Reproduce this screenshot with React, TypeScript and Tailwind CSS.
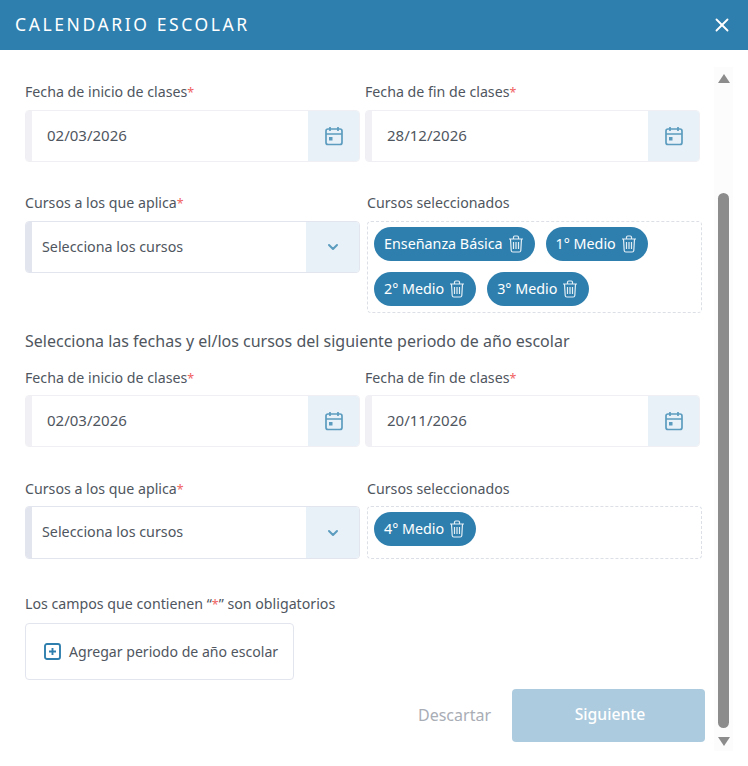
import React from 'react';
import { X, ChevronDown } from 'lucide-react';

const Req = () => <span className="text-[12.5px] text-[#f0625f]">*</span>;

const CalendarIcon = () => (
  <svg width="18" height="20" viewBox="0 0 18 20" fill="none" stroke="#5b9cbf" strokeWidth="1.7">
    <rect x="1" y="3" width="16" height="15.5" rx="2" />
    <path d="M1 8h16M5 1v4M13 1v4" />
    <rect x="4" y="11" width="3.5" height="3.5" fill="#5b9cbf" stroke="none" />
  </svg>
);

const TrashIcon = () => (
  <svg width="16" height="18" viewBox="0 0 16 18" fill="none" stroke="#e3eef5" strokeWidth="1.2">
    <path d="M1 4h14M5.5 4V2.2c0-.7.5-1.2 1.2-1.2h2.6c.7 0 1.2.5 1.2 1.2V4" />
    <path d="M2.5 4l.7 11.5c.1.9.7 1.5 1.6 1.5h6.4c.9 0 1.5-.6 1.6-1.5L13.5 4" />
    <path d="M5.5 7v7M8 7v7M10.5 7v7" />
  </svg>
);

const DateField = ({ label, value, gap }: { label: string; value: string; gap: string }) => (
  <div className="w-[335px]">
    <div className="h-[20px] text-[14.2px] leading-[20px] text-[#4f5660]">
      {label}
      <Req />
    </div>
    <div className={`flex h-[52px] overflow-hidden rounded border border-[#f0f0f4] bg-white ${gap}`}>
      <div className="w-[6px] bg-[#f0f0f5]" />
      <div className="flex flex-1 items-center pb-[2px] pl-[15px] text-[15px] text-[#4f5660]">{value}</div>
      <div className="flex w-[51px] items-center justify-center bg-[#e8f1f7]">
        <CalendarIcon />
      </div>
    </div>
  </div>
);

const SelectField = ({ gap, height }: { gap: string; height: string }) => (
  <div className="w-[335px]">
    <div className="h-[20px] text-[14.2px] leading-[20px] text-[#4f5660]">
      Cursos a los que aplica
      <Req />
    </div>
    <div className={`flex overflow-hidden rounded border border-[#e2e5ee] bg-white ${gap} ${height}`}>
      <div className="w-[6px] bg-[#e2e5ee]" />
      <div className="flex flex-1 items-center pb-[1px] pl-[10px] text-[14.3px] text-[#4f5660]">Selecciona los cursos</div>
      <div className="flex w-[53px] items-center justify-center bg-[#e8f1f7]">
        <ChevronDown size={16} strokeWidth={3} color="#5b9cbf" />
      </div>
    </div>
  </div>
);

const Chip = ({ text }: { text: string }) => (
  <div className="flex h-[34px] items-center gap-[5px] rounded-[17px] bg-[#2f7fae] pl-[10px] pr-[11px] text-[14.3px] text-white">
    <span className="pb-[1px]">{text}</span>
    <TrashIcon />
  </div>
);

const SelectedBox = ({ chips, box, gap }: { chips: string[][]; box: string; gap: string }) => (
  <div className="ml-[2px] w-[335px]">
    <div className="h-[20px] text-[14.2px] leading-[20px] text-[#4f5660]">Cursos seleccionados</div>
    <div className={`flex flex-col gap-[11px] rounded border border-dashed border-[#dcdfe6] px-[6px] pt-[5px] ${gap} ${box}`}>
      {chips.map((row, i) => (
        <div key={i} className="flex gap-[11px]">
          {row.map((c) => (
            <Chip key={c} text={c} />
          ))}
        </div>
      ))}
    </div>
  </div>
);

const App: React.FC = () => {
  return (
    <div className="flex h-[766px] w-[748px] flex-col overflow-hidden bg-white font-['Noto_Sans',sans-serif]">
      {/* Header */}
      <div className="flex h-[50px] shrink-0 items-center justify-between bg-[#2f7fae] pl-[15px] pr-[15px] text-white">
        <span className="pb-[2px] text-[17.5px] tracking-[2.6px]">CALENDARIO ESCOLAR</span>
        <X size={22} strokeWidth={2} />
      </div>

      <div className="flex flex-1">
        {/* Form */}
        <div className="w-[714px] pl-[25px] pt-[32px]">
          <div className="flex gap-[5px]">
            <DateField label="Fecha de inicio de clases" value="02/03/2026" gap="mt-[8px]" />
            <DateField label="Fecha de fin de clases" value="28/12/2026" gap="mt-[8px]" />
          </div>

          <div className="mt-[31px] flex gap-[5px]">
            <SelectField gap="mt-[8px]" height="h-[52px]" />
            <SelectedBox chips={[['Enseñanza Básica', '1° Medio'], ['2° Medio', '3° Medio']]} box="h-[92px]" gap="mt-[8px]" />
          </div>

          <div className="mt-[17px] h-[22px] text-[16px] leading-[22px] text-[#4f5660]">
            Selecciona las fechas y el/los cursos del siguiente periodo de año escolar
          </div>

          <div className="mt-[16px] flex gap-[5px]">
            <DateField label="Fecha de inicio de clases" value="02/03/2026" gap="mt-[7px]" />
            <DateField label="Fecha de fin de clases" value="20/11/2026" gap="mt-[7px]" />
          </div>

          <div className="mt-[32px] flex gap-[5px]">
            <SelectField gap="mt-[7px]" height="h-[53px]" />
            <SelectedBox chips={[['4° Medio']]} box="h-[53px]" gap="mt-[7px]" />
          </div>

          <div className="mt-[35px] h-[20px] text-[14.2px] leading-[20px] text-[#4f5660]">
            Los campos que contienen “<Req />” son obligatorios
          </div>

          <div className="mt-[9px] flex h-[57px] w-[269px] items-center gap-[8px] rounded border border-[#e2e5ee] pl-[18px] text-[14.1px] text-[#4f5660]">
            <svg width="17" height="17" viewBox="0 0 17 17" fill="none" stroke="#2f7fae" strokeWidth="1.9">
              <rect x="1" y="1" width="15" height="15" rx="2" />
              <path d="M8.5 5v7M5 8.5h7" />
            </svg>
            Agregar periodo de año escolar
          </div>

          <div className="mt-[9px] flex w-[680px] items-center justify-end gap-[21px]">
            <span className="pb-[2px] text-[16px] text-[#a9adb5]">Descartar</span>
            <div className="flex h-[53px] w-[193px] items-center justify-center rounded bg-[#adcbde] pb-[2px] pl-[3px] text-[15.7px] font-medium text-white">
              Siguiente
            </div>
          </div>
        </div>

        {/* Scrollbar */}
        <div className="mb-[15px] mt-[17px] flex w-[19px] flex-col items-center bg-[#fcfcfc]">
          <div className="mt-[7px] h-0 w-0 border-x-[6.5px] border-b-[9px] border-x-transparent border-b-[#8c8c8c]" />
          <div className="mt-[110px] w-[11px] flex-1 rounded-full bg-[#8c8c8c]" />
          <div className="mb-[5px] mt-[9px] h-0 w-0 border-x-[6.5px] border-t-[9px] border-x-transparent border-t-[#8c8c8c]" />
        </div>
      </div>
    </div>
  );
};

export default App;
